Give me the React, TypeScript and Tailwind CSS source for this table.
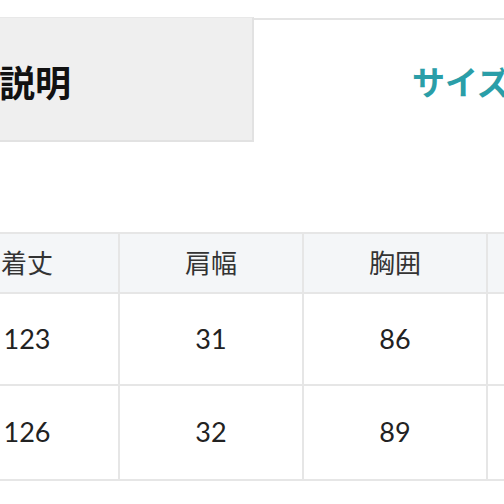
import React from "react";

const cjk = { fontFamily: '"Noto Sans CJK JP", "Noto Sans", sans-serif' };
const num = { fontFamily: 'Lato, "Noto Sans CJK JP", sans-serif' };

const headers = ["着丈", "肩幅", "胸囲", ""];
const rows = [
  ["123", "31", "86", ""],
  ["126", "32", "89", ""],
];

export default function App() {
  return (
    <div className="w-[504px] h-[504px] overflow-hidden bg-white relative">
      <div className="flex mt-[17px] w-[800px]">
        <div className="w-[254px] h-[125px] shrink-0 bg-[#efefef] border-t border-[#e8e8e8] border-r-2 border-r-[#e2e2e2] border-b-2 border-b-[#e2e2e2] flex items-center">
          <span className="text-[36px] font-bold text-[#111] leading-none ml-[-1px] mt-[3px]" style={cjk}>
            説明
          </span>
        </div>
        <div className="w-[524px] h-[125px] shrink-0 bg-white border-t-2 border-[#e4e4e4] mt-px flex items-center pl-[158px]">
          <span className="text-[33px] font-bold text-[#2a9ea8] leading-none whitespace-nowrap" style={cjk}>
            サイズ表
          </span>
        </div>
      </div>

      <div className="mt-[89px] ml-[-64px] w-[760px] border-t-2 border-[#e6e6e6]">
        <div className="flex h-[60px] bg-[#f4f6f8] border-b-2 border-[#e6e6e6]">
          {headers.map((h, j) => (
            <div
              key={j}
              className="w-[184px] shrink-0 border-r-2 border-[#e6e6e6] flex items-center justify-center text-[26px] text-[#333] pb-[3px]"
              style={cjk}
            >
              {h}
            </div>
          ))}
        </div>
        {rows.map((r, i) => (
          <div key={i} className={`flex ${i === 0 ? "h-[92px]" : "h-[95px]"} border-b-2 border-[#e6e6e6]`}>
            {r.map((c, j) => (
              <div
                key={j}
                className="w-[184px] shrink-0 border-r-2 border-[#e6e6e6] flex items-center justify-center text-[27px] text-[#222]"
                style={num}
              >
                {c}
              </div>
            ))}
          </div>
        ))}
      </div>
    </div>
  );
}
